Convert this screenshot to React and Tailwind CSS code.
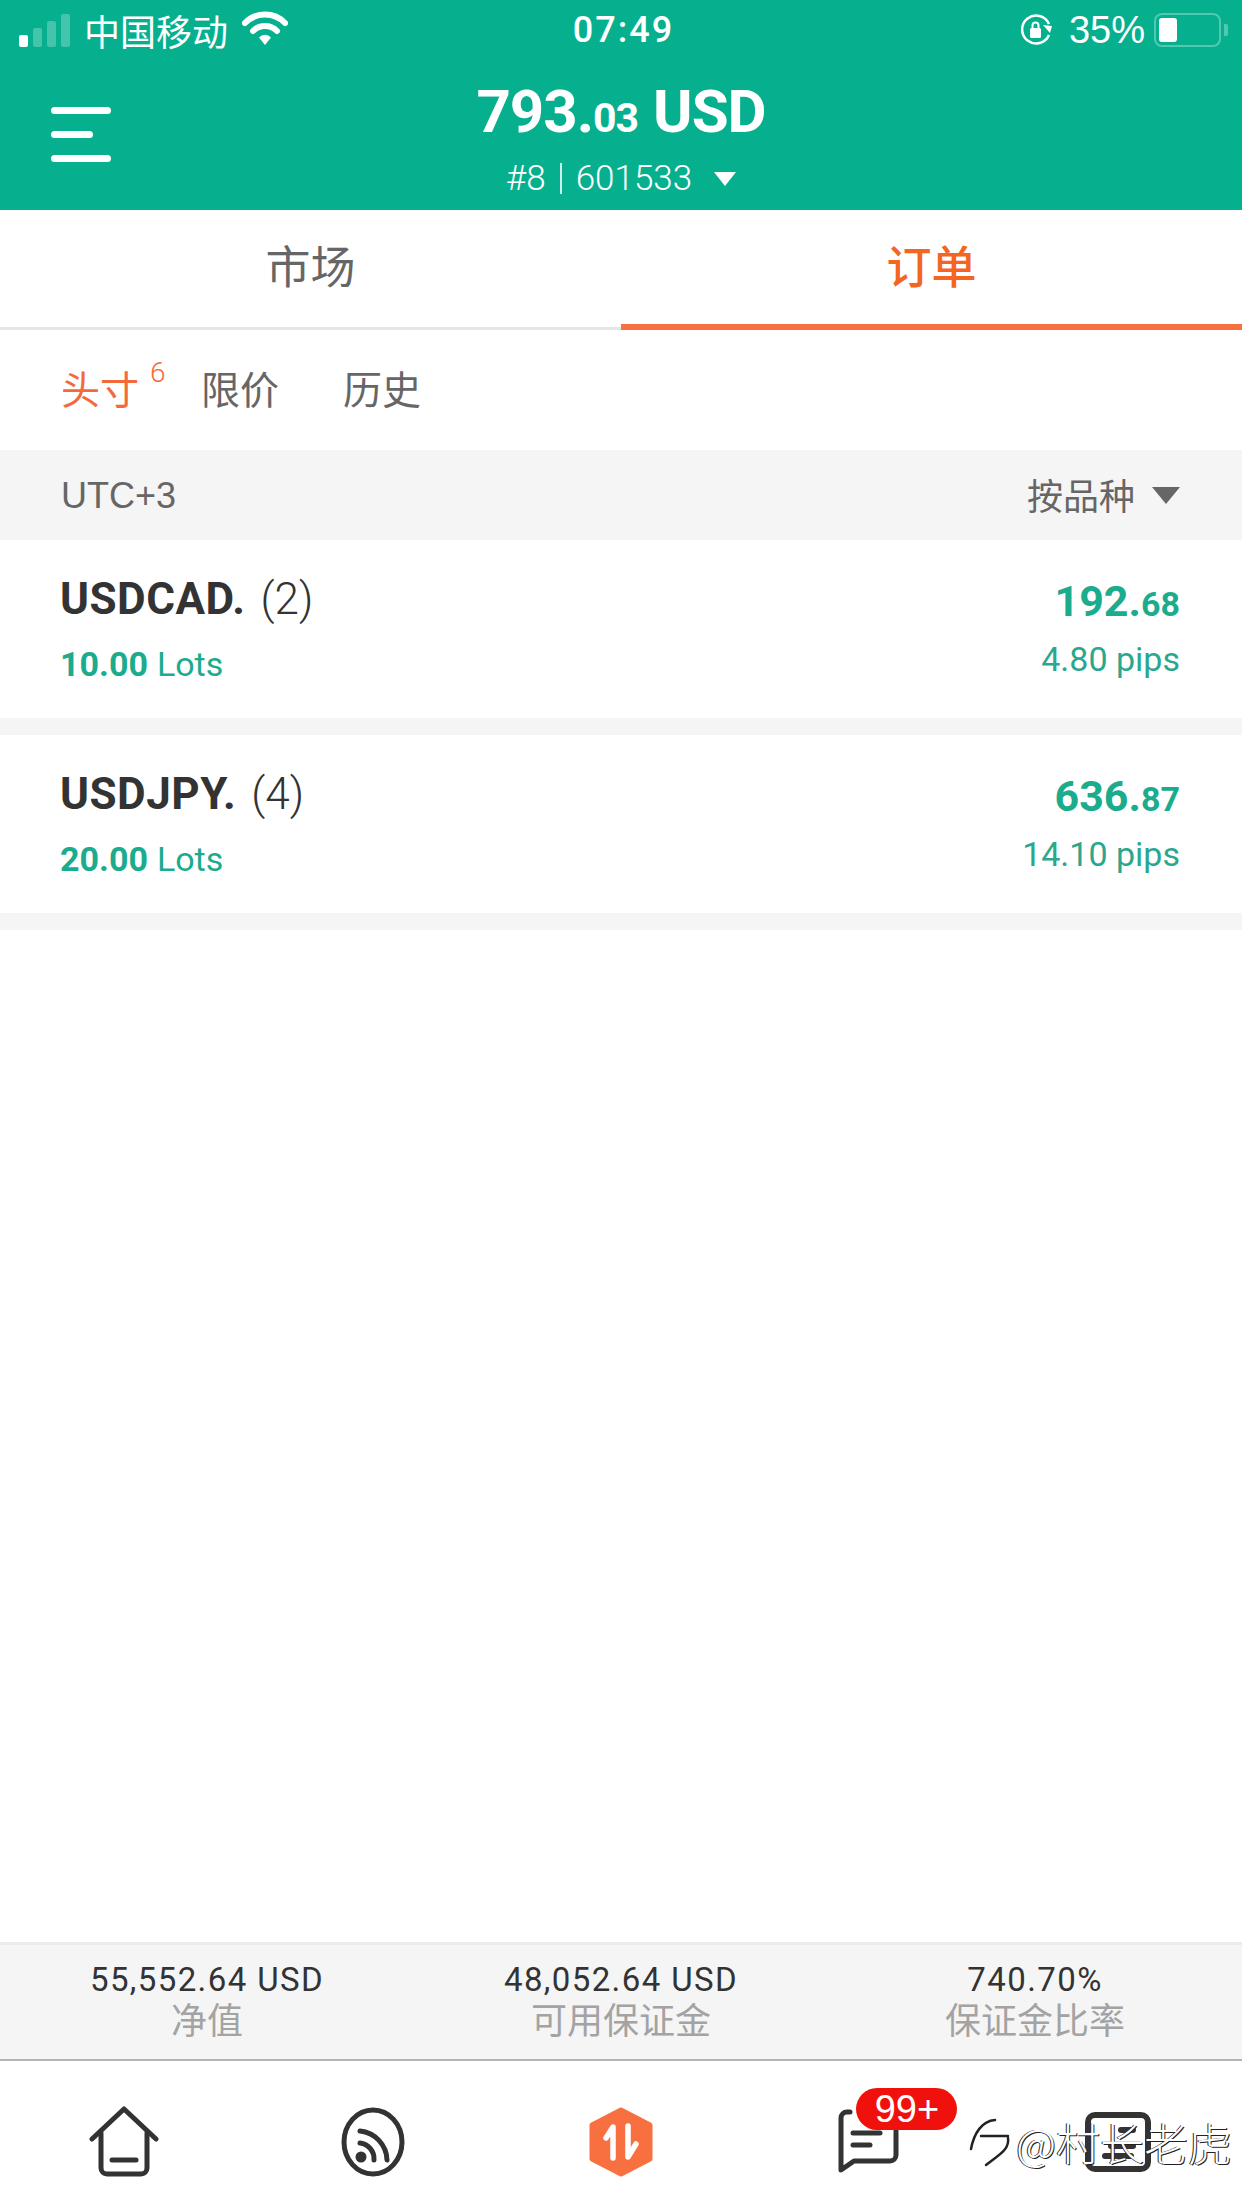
import React from 'react';

const dinFont = "font-['Roboto','Liberation_Sans',sans-serif]";
const cjk = "font-['Noto_Sans_CJK_SC','Noto_Sans_CJK_TC',sans-serif]";

const positions = [
  { symbol: 'USDCAD.', count: '(2)', lots: '10.00', whole: '192.', cents: '68', pips: '4.80 pips' },
  { symbol: 'USDJPY.', count: '(4)', lots: '20.00', whole: '636.', cents: '87', pips: '14.10 pips' },
];

const summary = [
  { value: '55,552.64 USD', label: '净值' },
  { value: '48,052.64 USD', label: '可用保证金' },
  { value: '740.70%', label: '保证金比率' },
];

const StatusBar = () => (
  <div className="h-[60px] grid grid-cols-[1fr_auto_1fr] items-center pl-[19px] pr-[14px] text-white">
    <div className="flex items-center">
      <div className="flex items-end gap-[5px] h-[34px] mr-[14px]">
        <span className="w-[9px] h-[12px] bg-white rounded-[2px]"></span>
        <span className="w-[9px] h-[19px] bg-white/25 rounded-[2px]"></span>
        <span className="w-[9px] h-[26px] bg-white/25 rounded-[2px]"></span>
        <span className="w-[9px] h-[33px] bg-white/25 rounded-[2px]"></span>
      </div>
      <span className={`text-[36px] leading-none ${cjk}`}>中国移动</span>
      <svg className="ml-[14px] mb-[2px]" width="46" height="36" viewBox="0 0 46 36" fill="none">
        <path d="M3 12a28 28 0 0 1 40 0" stroke="white" strokeWidth="6" strokeLinecap="round" />
        <path d="M11 20a17 17 0 0 1 24 0" stroke="white" strokeWidth="6" strokeLinecap="round" />
        <path d="M17 26.5a8 8 0 0 1 12 0L23 34z" fill="white" />
      </svg>
    </div>
    <span className={`text-[36px] leading-none font-medium tracking-[2px] ${dinFont}`}>07:49</span>
    <div className="flex items-center justify-end">
      <svg width="36" height="36" viewBox="0 0 36 36" fill="none">
        <path d="M31 23a14 14 0 1 1 0-11" stroke="white" strokeWidth="2.5" />
        <path d="M25 13l9 1-2 7z" fill="white" />
        <rect x="12" y="16" width="11" height="10" rx="1.5" fill="white" />
        <path d="M14.5 16v-2.5a3 3 0 0 1 6 0V16" stroke="white" strokeWidth="2" />
      </svg>
      <span className="ml-[15px] text-[38px] leading-none font-['Liberation_Sans',sans-serif]">35%</span>
      <div className="ml-[9px] w-[67px] h-[34px] border-[2px] border-white/30 rounded-[8px] p-[3px]">
        <div className="w-[18px] h-full bg-white rounded-[3px]"></div>
      </div>
      <span className="ml-[3px] w-[4px] h-[12px] bg-white/30 rounded-r-[2px]"></span>
    </div>
  </div>
);

const Header = () => (
  <div className="relative h-[150px] flex flex-col items-center text-white">
    {/* menu button */}
    <div className="absolute left-[51px] top-[47px] flex flex-col gap-[17px]">
      <span className="block w-[60px] h-[7px] bg-white rounded-full"></span>
      <span className="block w-[42px] h-[7px] bg-white rounded-full"></span>
      <span className="block w-[60px] h-[7px] bg-white rounded-full"></span>
    </div>
    <div className={`mt-[22px] h-[58px] flex items-baseline font-bold leading-none tracking-[-1px] ${dinFont}`}>
      <span className="text-[60px]">793.</span>
      <span className="text-[41px]">03</span>
      <span className="text-[60px] ml-[15px]">USD</span>
    </div>
    <div className={`mt-[21px] flex items-center text-[35px] leading-none ${dinFont} font-light`}>
      <span>#8</span>
      <span className="mx-[14px] w-[2px] h-[31px] bg-white/80"></span>
      <span>601533</span>
      <span className="ml-[22px] w-0 h-0 border-x-[11px] border-x-transparent border-t-[14px] border-t-white"></span>
    </div>
  </div>
);

const Tabs = () => (
  <div className={`h-[120px] flex text-[45px] leading-none ${cjk}`}>
    <div className="w-1/2 flex items-center justify-center pb-[8px] text-[#666666] border-b-[3px] border-[#e6e6e6]">市场</div>
    <div className="w-1/2 flex items-center justify-center pb-[6px] text-[#f4651f] font-medium border-b-[6px] border-[#f97040]">订单</div>
  </div>
);

const SubTabs = () => (
  <div className={`h-[120px] flex items-center pb-[5px] pl-[61px] text-[39px] leading-none ${cjk}`}>
    <span className="relative text-[#f4693a]">
      头寸
      <sup className={`absolute left-[89px] top-[5px] text-[28px] font-light ${dinFont}`}>6</sup>
    </span>
    <span className="ml-[62px] text-[#666666]">限价</span>
    <span className="ml-[64px] text-[#666666]">历史</span>
  </div>
);

const PositionRow = ({ item }) => (
  <div className={`h-[178px] bg-white flex justify-between pl-[60px] pr-[62px] ${dinFont}`}>
    <div>
      <div className="mt-[35px] h-[48px] flex items-center text-[44px] leading-none text-[#333333]">
        <span className="font-bold tracking-[0.5px]">{item.symbol}</span>
        <span className="ml-[15px] font-light">{item.count}</span>
      </div>
      <div className="mt-[24px] flex items-baseline text-[34px] leading-none text-[#1bab8d]">
        <span className="font-bold">{item.lots}</span>
        <span className="ml-[9px]">Lots</span>
      </div>
    </div>
    <div className="flex flex-col items-end">
      <div className="mt-[40px] h-[48px] flex items-baseline text-[43px] leading-none font-bold text-[#1bab8d]">
        <span>{item.whole}</span>
        <span className="text-[34px]">{item.cents}</span>
      </div>
      <div className="mt-[14px] text-[34px] leading-none text-[#2aa78e]">{item.pips}</div>
    </div>
  </div>
);

const SummaryBar = () => (
  <div className="h-[119px] bg-[#f5f5f5] border-t-[3px] border-[#ececec] border-b-[2px] border-b-[#b4b4b4] grid grid-cols-3 text-center">
    {summary.map((cell) => (
      <div key={cell.label} className="pt-[17px]">
        <div className={`text-[33px] leading-[36px] tracking-[1.4px] text-[#333333] ${dinFont}`}>{cell.value}</div>
        <div className={`mt-[1px] text-[36px] leading-[38px] text-[#a3a3a3] ${cjk}`}>{cell.label}</div>
      </div>
    ))}
  </div>
);

const BottomNav = () => (
  <div className="relative h-[147px] bg-white grid grid-cols-5 items-center justify-items-center">
    {/* home */}
    <svg className="mt-[14px]" width="70" height="72" viewBox="0 0 70 72" fill="none" stroke="#333333" strokeWidth="5" strokeLinecap="round" strokeLinejoin="round">
      <path d="M3 33L35 3l32 30" />
      <path d="M12 27v35a6 6 0 0 0 6 6h34a6 6 0 0 0 6-6V27" />
      <path d="M23 54h24" />
    </svg>
    {/* feed */}
    <svg className="mt-[14px]" width="66" height="70" viewBox="0 0 66 70" fill="none" stroke="#333333" strokeWidth="5" strokeLinecap="round">
      <ellipse cx="33" cy="35" rx="29" ry="32" />
      <path d="M20 24a30 30 0 0 1 27 29" />
      <path d="M20 36a16 16 0 0 1 14 17" />
      <circle cx="21" cy="50" r="3" fill="#333333" />
    </svg>
    {/* trade, selected */}
    <svg className="mt-[14px]" width="64" height="70" viewBox="0 0 64 70">
      <path d="M32 3L61 18V52L32 67L3 52V18z" fill="#f97040" stroke="#f97040" strokeWidth="5" strokeLinejoin="round" />
      <path d="M24 51V20l-7 11" fill="none" stroke="white" strokeWidth="5.5" strokeLinecap="round" strokeLinejoin="round" />
      <path d="M39 19v31l8-13" fill="none" stroke="white" strokeWidth="5.5" strokeLinecap="round" strokeLinejoin="round" />
    </svg>
    {/* messages */}
    <div className="relative mt-[14px]">
      <svg width="62" height="66" viewBox="0 0 62 66" fill="none" stroke="#333333" strokeWidth="5" strokeLinecap="round" strokeLinejoin="round">
        <path d="M12 3H9a6 6 0 0 0-6 6v52l13-9h36a6 6 0 0 0 6-6V15a6 6 0 0 0-6-6" />
        <path d="M15 24h27" />
        <path d="M15 36h17" />
      </svg>
      <div className="absolute left-[18px] top-[-21px] w-[101px] h-[42px] rounded-full bg-[#f0100c] text-white text-[38px] leading-[42px] text-center font-['Liberation_Sans',sans-serif]">99+</div>
    </div>
    {/* account */}
    <svg className="mt-[14px]" width="66" height="60" viewBox="0 0 66 60" fill="none" stroke="#333333" strokeWidth="6" strokeLinecap="round" strokeLinejoin="round">
      <rect x="3" y="3" width="60" height="54" rx="7" />
      <path d="M36 18h12" />
      <path d="M26 34h22" />
      <path d="M20 44h26" />
    </svg>
    {/* watermark over the tab bar */}
    <div className={`absolute right-[10px] top-[56px] flex items-center text-[44px] leading-none font-light text-white [text-shadow:1px_1px_0_#222,-1px_0_0_#222] ${cjk}`}>
      <svg className="mr-[4px]" width="44" height="50" viewBox="0 0 44 50" fill="none" stroke="#222222" strokeWidth="2.5" strokeLinecap="round">
        <path d="M3 32C6 16 14 4 27 3" />
        <path d="M13 19h27" />
        <path d="M40 21c2 12-11 18-22 27" />
      </svg>
      <span>@村长老虎</span>
    </div>
  </div>
);

export default function App() {
  return (
    <div className="w-[1242px] h-[2208px] flex flex-col bg-white overflow-hidden font-['Liberation_Sans',sans-serif]">
      <div className="bg-[#06b08f]">
        <StatusBar />
        <Header />
      </div>
      <Tabs />
      <SubTabs />
      <div className="h-[90px] bg-[#f5f5f5] flex items-center justify-between pl-[61px] pr-[62px] text-[#666666]">
        <span className="text-[36px] leading-none mt-[2px]">UTC+3</span>
        <div className="flex items-center">
          <span className={`text-[36px] leading-none mb-[3px] ${cjk}`}>按品种</span>
          <span className="ml-[17px] w-0 h-0 border-x-[14px] border-x-transparent border-t-[17px] border-t-[#666666]"></span>
        </div>
      </div>
      {positions.map((item) => (
        <div key={item.symbol}>
          <PositionRow item={item} />
          <div className="h-[17px] bg-[#f5f5f5]"></div>
        </div>
      ))}
      <div className="flex-1"></div>
      <SummaryBar />
      <BottomNav />
    </div>
  );
}
